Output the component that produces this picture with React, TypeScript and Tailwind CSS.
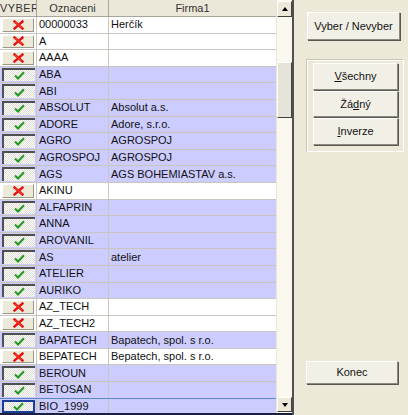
import React from "react";

type Row = { code: string; firm: string; on: boolean };

const rows: Row[] = [
  { code: "00000033", firm: "Herčík", on: false },
  { code: "A", firm: "", on: false },
  { code: "AAAA", firm: "", on: false },
  { code: "ABA", firm: "", on: true },
  { code: "ABI", firm: "", on: true },
  { code: "ABSOLUT", firm: "Absolut a.s.", on: true },
  { code: "ADORE", firm: "Adore, s.r.o.", on: true },
  { code: "AGRO", firm: "AGROSPOJ", on: true },
  { code: "AGROSPOJ", firm: "AGROSPOJ", on: true },
  { code: "AGS", firm: "AGS BOHEMIASTAV a.s.", on: true },
  { code: "AKINU", firm: "", on: false },
  { code: "ALFAPRIN", firm: "", on: true },
  { code: "ANNA", firm: "", on: true },
  { code: "AROVANIL", firm: "", on: true },
  { code: "AS", firm: "atelier", on: true },
  { code: "ATELIER", firm: "", on: true },
  { code: "AURIKO", firm: "", on: true },
  { code: "AZ_TECH", firm: "", on: false },
  { code: "AZ_TECH2", firm: "", on: false },
  { code: "BAPATECH", firm: "Bapatech, spol. s r.o.", on: true },
  { code: "BEPATECH", firm: "Bepatech, spol. s r.o.", on: false },
  { code: "BEROUN", firm: "", on: true },
  { code: "BETOSAN", firm: "", on: true },
  { code: "BIO_1999", firm: "", on: true },
];

function Cross() {
  return (
    <svg width="11" height="10" viewBox="0 0 11 10">
      <path d="M1.5 1.5 L9.5 8.5 M9.5 1.5 L1.5 8.5" stroke="#e81010" strokeWidth="2.4" strokeLinecap="square" fill="none" />
      <path d="M2 2 L9 8" stroke="#ff7a3a" strokeWidth="0.6" fill="none" />
    </svg>
  );
}

function Check() {
  return (
    <svg width="11" height="9" viewBox="0 0 11 9">
      <path d="M1 4.5 L4 7.5 L10 1.2" stroke="#1f9a1f" strokeWidth="2" fill="none" />
    </svg>
  );
}

function SelCell({ on, focus }: { on: boolean; focus: boolean }) {
  if (on) {
    return (
      <div className="w-[37px] h-full border-r border-[#c8c6be] flex items-stretch pl-[2px] pr-[1px] py-[1px]">
        <div
          className={`flex-1 flex items-center justify-center ${
            focus ? "border-2 border-[#1a3d9a]" : "border-t-2 border-l-2 border-t-[#505050] border-l-[#505050]"
          } bg-[image:repeating-conic-gradient(#ffffff_0%_25%,#dddbd2_0%_50%)] bg-[length:2px_2px]`}
        >
          <Check />
        </div>
      </div>
    );
  }
  return (
    <div className="w-[37px] h-full border-r border-[#c8c6be] flex items-stretch pl-[2px] pr-[2px] py-[1px]">
      <div className="flex-1 flex items-center justify-center bg-[#ece9d8] border border-t-white border-l-white border-r-[#9a9888] border-b-[#9a9888]">
        <Cross />
      </div>
    </div>
  );
}

function Btn({ children, className }: { children: React.ReactNode; className: string }) {
  return (
    <div
      className={`flex items-center justify-center bg-[#f2f0e6] border border-t-white border-l-white border-r-[#8c8a7c] border-b-[#8c8a7c] shadow-[1px_1px_0_#5a5850] text-[#111] ${className}`}
    >
      {children}
    </div>
  );
}

export default function App() {
  return (
    <div className="w-[408px] h-[415px] flex bg-[#ece9d8] overflow-hidden text-[11px] leading-none text-[#111] font-['Liberation_Sans',Arial,sans-serif]">
      {/* grid */}
      <div className="w-[292px] h-full flex flex-col border-b-2 border-[#1c2040]">
        <div className="flex-1 flex min-h-0">
          <div className="w-[276px] flex flex-col overflow-hidden">
            {/* header */}
            <div className="h-[17px] shrink-0 flex bg-[#ebe8d9] border-b border-[#a8a698] text-[#333]">
              <div className="w-[37px] min-w-0 border-r border-[#a8a698] flex items-center overflow-hidden whitespace-nowrap">
                <span className="tracking-[0.4px]">VYBER</span>
              </div>
              <div className="w-[72px] border-r border-[#a8a698] flex items-center justify-center">Oznaceni</div>
              <div className="flex-1 flex items-center justify-center">Firma1</div>
            </div>
            {rows.map((r, i) => {
              const focus = i === rows.length - 1;
              const beforeFocus = i === rows.length - 2;
              return (
                <div
                  key={i}
                  className={`h-[16.6px] shrink-0 flex border-b ${
                    beforeFocus ? "border-[#5b86c9]" : "border-[#c8c6be]"
                  } ${r.on ? "bg-[#ccccff]" : "bg-white"}`}
                >
                  <SelCell on={r.on} focus={focus} />
                  <div className="w-[72px] border-r border-[#c8c6be] flex items-center pl-[2px] whitespace-nowrap overflow-hidden">
                    {r.code}
                  </div>
                  <div className="flex-1 flex items-center pl-[2px] whitespace-nowrap overflow-hidden">{r.firm}</div>
                </div>
              );
            })}
          </div>
          {/* scrollbar */}
          <div className="w-[16px] flex flex-col bg-[#faf8ef] border-l border-[#e8e6dc]">
            <div className="h-[16px] mt-[1px] flex items-center justify-center bg-[#ece9d8] border border-t-white border-l-white border-r-[#404040] border-b-[#404040]">
              <div className="w-0 h-0 border-l-[3px] border-r-[3px] border-b-[4px] border-l-transparent border-r-transparent border-b-black" />
            </div>
            <div className="h-[45px]" />
            <div className="h-[56px] bg-[#e6e4d8] border border-t-white border-l-white border-r-[#404040] border-b-[#404040]" />
            <div className="flex-1" />
            <div className="h-[15px] mb-[1px] flex items-center justify-center bg-[#ece9d8] border border-t-white border-l-white border-r-[#404040] border-b-[#404040]">
              <div className="w-0 h-0 border-l-[3px] border-r-[3px] border-t-[4px] border-l-transparent border-r-transparent border-t-black" />
            </div>
          </div>
        </div>
      </div>
      {/* right panel */}
      <div className="flex-1 h-full flex flex-col border-l-2 border-[#505050] pl-[12px] pr-[4px] pt-[12px] pb-[31px]">
        <Btn className="ml-[1px] w-[93px] h-[28px]">Vyber / Nevyber</Btn>
        <div className="mt-[19px] w-[98px] h-[93px] border border-t-[#c8c4b0] border-l-[#c8c4b0] border-r-white border-b-white shadow-[inset_1px_1px_0_#fff] flex flex-col gap-[1px] px-[6px] pt-[3px]">
          <Btn className="w-[85px] h-[27px]">
            <span>
              <span className="underline">V</span>šechny
            </span>
          </Btn>
          <Btn className="w-[85px] h-[26px]">
            <span>
              Žá<span className="underline">d</span>ný
            </span>
          </Btn>
          <Btn className="w-[85px] h-[27px]">
            <span>
              <span className="underline">I</span>nverze
            </span>
          </Btn>
        </div>
        <div className="flex-1" />
        <Btn className="w-[92px] h-[23px]">Konec</Btn>
      </div>
    </div>
  );
}
